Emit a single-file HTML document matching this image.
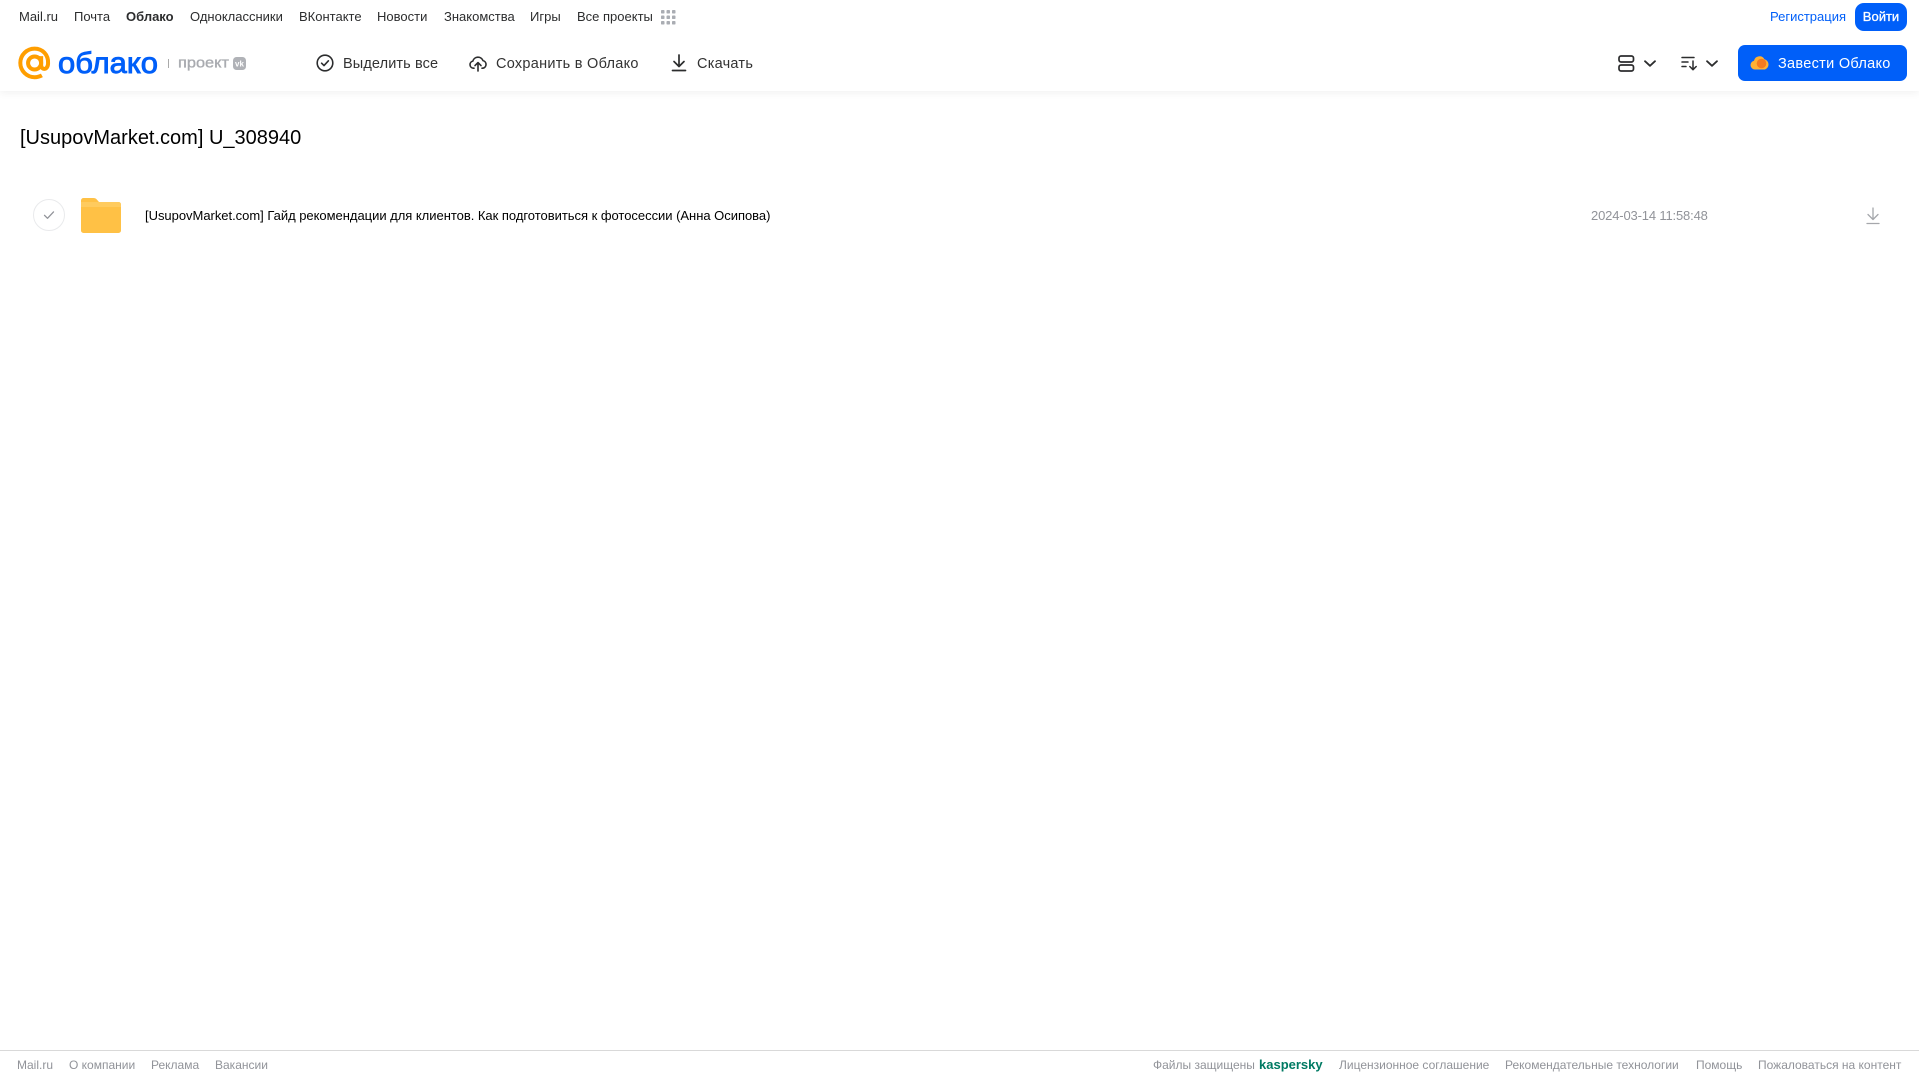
<!DOCTYPE html>
<html lang="ru"><head><meta charset="utf-8"><title>Облако</title>
<style>
html,body{margin:0;padding:0;background:#fff;width:1919px;height:1079px;overflow:hidden}
body{position:relative;font-family:"Liberation Sans",Arial,sans-serif}
.t{position:absolute;white-space:nowrap;line-height:18px;height:18px}
.n{font-size:13px;color:#2c2d2e;top:8px}
.a{font-size:14.5px;color:#333;top:55px}
.f{font-size:12px;color:#919399;top:1056px}
svg{position:absolute;overflow:visible}
</style></head><body>
<div style="position:absolute;left:0;top:0;width:1919px;height:91px;background:#fff;box-shadow:0 2px 8px rgba(0,0,0,.06)"></div>
<span class="t n" style="left:19px">Mail.ru</span>
<span class="t n" style="left:74px">Почта</span>
<span class="t n" style="left:126px;font-weight:bold">Облако</span>
<span class="t n" style="left:190px">Одноклассники</span>
<span class="t n" style="left:299px">ВКонтакте</span>
<span class="t n" style="left:377px">Новости</span>
<span class="t n" style="left:444px">Знакомства</span>
<span class="t n" style="left:530px">Игры</span>
<span class="t n" style="left:577px">Все проекты</span>
<svg style="left:661px;top:10px" width="15" height="15" fill="#aaadb3"><rect x="0" y="0" width="3.5" height="3.5" rx=".8"/><rect x="5.5" y="0" width="3.5" height="3.5" rx=".8"/><rect x="11" y="0" width="3.5" height="3.5" rx=".8"/><rect x="0" y="5.5" width="3.5" height="3.5" rx=".8"/><rect x="5.5" y="5.5" width="3.5" height="3.5" rx=".8"/><rect x="11" y="5.5" width="3.5" height="3.5" rx=".8"/><rect x="0" y="11" width="3.5" height="3.5" rx=".8"/><rect x="5.5" y="11" width="3.5" height="3.5" rx=".8"/><rect x="11" y="11" width="3.5" height="3.5" rx=".8"/></svg>
<span class="t n" style="left:1770px;color:#005ff9">Регистрация</span>
<div style="position:absolute;left:1855px;top:3px;width:52px;height:28px;background:#005ff9;border-radius:9px;color:#fff;font-size:13px;-webkit-text-stroke:.3px #fff;line-height:28px;text-align:center">Войти</div>

<svg style="left:0;top:35px" width="260" height="55">
<g transform="translate(34.6 28) scale(.91) translate(-35 -28)" fill="none" stroke="#ff9e00" stroke-width="4.4"><circle cx="35" cy="28" r="7.2"/><path d="M42.2 20.5v9.500c0 6 7.300 6.400 7.600-1.500 .6-9.500-6.200-16.300-14.800-16.300a15.700 15.700 0 1 0 0 31.400c3 0 5.500-.6 8-2"/></g>
<text x="58" y="38" font-family="Liberation Sans,sans-serif" font-size="30" fill="#005ff9" stroke="#005ff9" stroke-width=".9" textLength="100" lengthAdjust="spacingAndGlyphs">облако</text>
<rect x="168" y="24" width="1" height="9" fill="#aaa"/>
<text x="178" y="32.500" font-family="Liberation Sans,sans-serif" font-size="14.500" fill="#a9abb0" stroke="#a9abb0" stroke-width=".35" textLength="51" lengthAdjust="spacingAndGlyphs">проект</text>
<rect x="233" y="22" width="13" height="13" rx="3.500" fill="#b0b2b7"/>
<text x="239.500" y="31.500" font-family="Liberation Sans,sans-serif" font-weight="bold" font-size="8" fill="#fff" text-anchor="middle">vk</text>
</svg>

<svg style="left:316px;top:54px" width="18" height="18" fill="none" stroke="#2c2d2e" stroke-width="1.600" stroke-linecap="round" stroke-linejoin="round"><circle cx="9" cy="9" r="7.800"/><path d="M5.600 9.200l2.400 2.400 4.400-4.800"/></svg>
<span class="t a" style="left:343px;letter-spacing:.12px">Выделить все</span>
<svg style="left:469px;top:54px" width="18" height="18" fill="none" stroke="#2c2d2e" stroke-width="1.600" stroke-linecap="round" stroke-linejoin="round"><path d="M5 14.200H4.400A3.600 3.600 0 0 1 3.800 7.100 5.400 5.400 0 0 1 14 6.600a3.900 3.900 0 0 1 0 7.600h-1"/><path d="M9 17V8.800M6 11.600l3-3 3 3"/></svg>
<span class="t a" style="left:496px;letter-spacing:.27px">Сохранить в Облако</span>
<svg style="left:671px;top:54px" width="16" height="18" fill="none" stroke="#2c2d2e" stroke-width="1.700" stroke-linecap="round" stroke-linejoin="round"><path d="M8 1v11M3 7.500L8 12.500l5-5M1.500 16.500h13"/></svg>
<span class="t a" style="left:697px;letter-spacing:.25px">Скачать</span>

<svg style="left:1618px;top:55px" width="18" height="17" fill="none" stroke="#2c2d2e" stroke-width="1.700"><rect x="1" y="1" width="14.500" height="6" rx="2"/><rect x="1" y="10" width="14.500" height="6" rx="2"/></svg>
<svg style="left:1644px;top:60px" width="12" height="8" fill="none" stroke="#2c2d2e" stroke-width="1.800" stroke-linecap="round" stroke-linejoin="round"><path d="M1 1.200l5 4.600 5-4.600"/></svg>
<svg style="left:1681px;top:56px" width="17" height="15" fill="none" stroke="#2c2d2e" stroke-width="1.500" stroke-linecap="round" stroke-linejoin="round"><path d="M1 1.500h12M1 6h6M1 10.500h4M12 5v8.500M8.800 10.500l3.200 3.200 3.200-3.200"/></svg>
<svg style="left:1706px;top:60px" width="12" height="8" fill="none" stroke="#2c2d2e" stroke-width="1.800" stroke-linecap="round" stroke-linejoin="round"><path d="M1 1.200l5 4.600 5-4.600"/></svg>
<div style="position:absolute;left:1738px;top:45px;width:169px;height:36px;background:#005ff9;border-radius:7px"></div>
<svg style="left:1750px;top:54px" width="20" height="17"><path d="M5 15.500a4.400 4.400 0 0 1-1-8.700 5.600 5.600 0 0 1 10.400-1.600 5.400 5.400 0 0 1 .6 10.300z" fill="#ffb133"/><circle cx="11.500" cy="9.500" r="4.800" fill="#f47b20"/></svg>
<span class="t a" style="left:1778px;color:#fff;letter-spacing:.3px">Завести Облако</span>

<span style="position:absolute;left:20px;top:124px;font-size:20px;line-height:28px;color:#000;white-space:nowrap">[UsupovMarket.com] U_308940</span>

<svg style="left:33px;top:199px" width="32" height="32" fill="none"><circle cx="16" cy="16" r="15.500" stroke="#e9eaec"/><path d="M11.500 16.300l3 3 6-6.400" stroke="#919399" stroke-width="1.300" stroke-linecap="round" stroke-linejoin="round"/></svg>
<svg style="left:81px;top:198px" width="40" height="35"><path d="M2.500 0h10c1.500 0 2.500.5 3.400 1.600L18 4h19.500A2.500 2.500 0 0 1 40 6.500v26a2.500 2.500 0 0 1-2.500 2.500h-35A2.500 2.500 0 0 1 0 32.500V2.500A2.500 2.500 0 0 1 2.500 0z" fill="#ffc145"/><path d="M0 9h40v-2.500A2.500 2.500 0 0 0 37.500 4H0z" fill="#ffcb5e"/></svg>
<span class="t" style="left:145px;top:207px;font-size:13px;color:#000;letter-spacing:-.025px">[UsupovMarket.com] Гайд рекомендации для клиентов. Как подготовиться к фотосессии (Анна Осипова)</span>
<span class="t" style="left:1591px;top:207px;font-size:13px;color:#919399;letter-spacing:-.16px">2024-03-14 11:58:48</span>
<svg style="left:1866px;top:207px" width="14" height="18" fill="none" stroke="#a5a7ab" stroke-width="1.300" stroke-linecap="round" stroke-linejoin="round"><path d="M7 1v11M2 7.500l5 5 5-5M1 16.500h12"/></svg>

<div style="position:absolute;left:0;top:1050px;width:1919px;height:1px;background:#d9d9d9"></div>
<span class="t f" style="left:17px">Mail.ru</span>
<span class="t f" style="left:69px">О компании</span>
<span class="t f" style="left:151px">Реклама</span>
<span class="t f" style="left:215px">Вакансии</span>
<span class="t f" style="left:1153px">Файлы защищены</span>
<span class="t f" style="left:1259px;color:#007a63;font-weight:bold;font-size:13px">kaspersky</span>
<span class="t f" style="left:1339px">Лицензионное соглашение</span>
<span class="t f" style="left:1505px">Рекомендательные технологии</span>
<span class="t f" style="left:1696px">Помощь</span>
<span class="t f" style="left:1758px">Пожаловаться на контент</span>
</body></html>
